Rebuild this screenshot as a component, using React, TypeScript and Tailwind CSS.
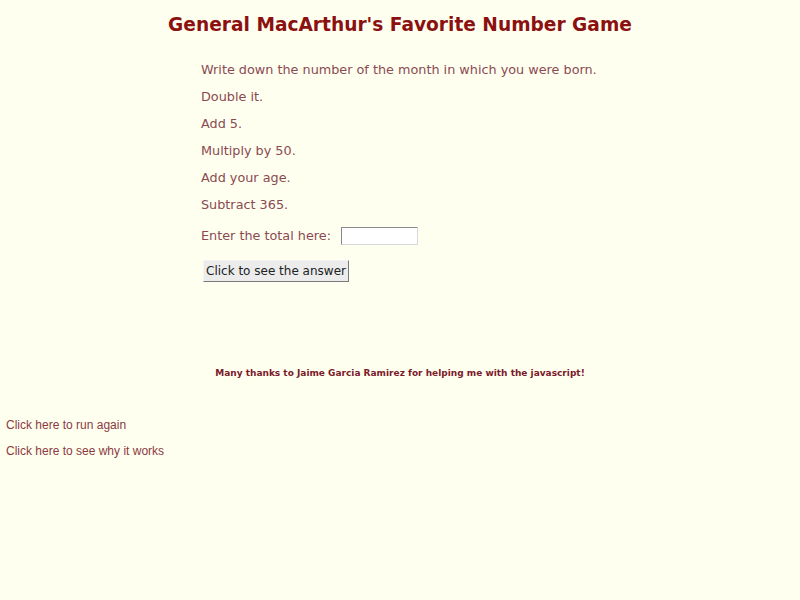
export default function App() {
  const steps = [
    "Write down the number of the month in which you were born.",
    "Double it.",
    "Add 5.",
    "Multiply by 50.",
    "Add your age.",
    "Subtract 365.",
  ];

  return (
    <div className="min-h-[600px] w-[800px] bg-[#fffff0] font-['DejaVu_Sans',sans-serif]">
      {/* titulo */}
      <h1 className="pt-[13px] text-center text-[18.6px] font-bold leading-[24px] text-[#8b1010]">
        General MacArthur's Favorite Number Game
      </h1>

      {/* pasos */}
      <div className="ml-[201px] mt-[25px] flex flex-col gap-[11px] text-[12.8px] leading-[16px] text-[#8a4a50]">
        {steps.map((s) => (
          <p key={s}>{s}</p>
        ))}
        <div className="mt-[3px] flex items-center gap-[10px]">
          <span>Enter the total here:</span>
          <input
            type="text"
            className="h-[18px] w-[77px] border border-t-[#8a8a8a] border-l-[#8a8a8a] border-r-[#d8d8d8] border-b-[#d8d8d8] bg-white"
          />
        </div>
        <div className="ml-[2px] mt-[4px]">
          <button className="h-[22px] border border-t-[#f4f4f4] border-l-[#f4f4f4] border-r-[#7a7a7a] border-b-[#7a7a7a] bg-[#ececec] px-[2px] text-[12px] leading-[16px] text-[#222]">
            Click to see the answer
          </button>
        </div>
      </div>

      {/* gracias */}
      <p className="mt-[86px] text-center text-[9px] font-bold leading-[11px] text-[#7a1a2a]">
        Many thanks to Jaime Garcia Ramirez for helping me with the javascript!
      </p>

      {/* links */}
      <div className="ml-[6px] mt-[39px] flex flex-col gap-[12px] font-['Liberation_Sans',Arial,sans-serif] text-[12px] leading-[14px] text-[#8a3a40]">
        <a href="#">Click here to run again</a>
        <a href="#">Click here to see why it works</a>
      </div>
    </div>
  );
}
